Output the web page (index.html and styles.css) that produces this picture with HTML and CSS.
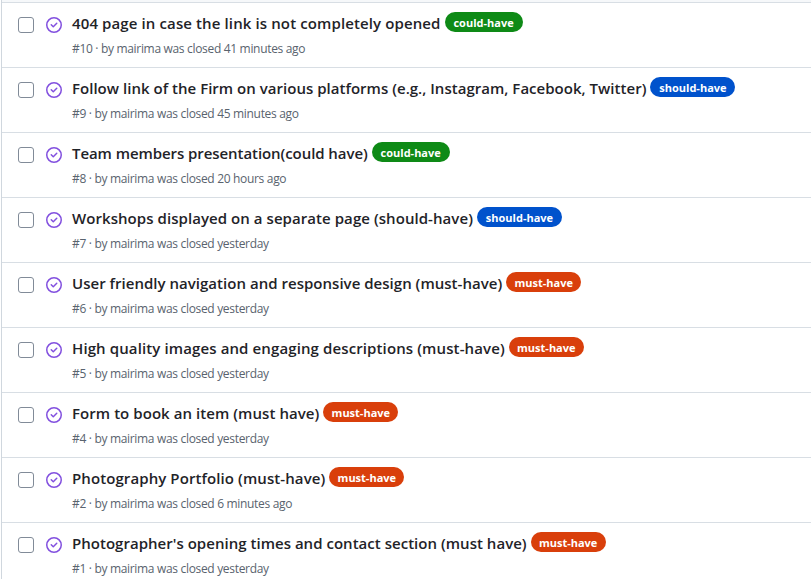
FILE: index.html
```html
<!DOCTYPE html>
<html lang="en">
<head>
<meta charset="utf-8">
<title>Issues</title>
<link rel="stylesheet" href="styles.css">
</head>
<body>
<svg class="defs" aria-hidden="true"><symbol id="closed" viewBox="0 0 16 16"><path d="M11.28 6.78a.75.75 0 0 0-1.06-1.06L7.25 8.69 5.78 7.22a.75.75 0 0 0-1.06 1.06l2 2a.75.75 0 0 0 1.06 0l3.5-3.5Z"/><path d="M16 8A8 8 0 1 1 0 8a8 8 0 0 1 16 0Zm-1.5 0a6.5 6.5 0 1 0-13 0 6.5 6.5 0 0 0 13 0Z"/></symbol></svg>
<main class="issues">
<div class="issues-header"></div>
<div class="issue"><span class="check"></span><svg class="icon"><use href="#closed"/></svg><div class="body"><div class="line"><a class="title wider">404 page in case the link is not completely opened</a><span class="label could">could-have</span></div><div class="meta">#10 · by mairima was closed 41 minutes ago</div></div></div>
<div class="issue"><span class="check"></span><svg class="icon"><use href="#closed"/></svg><div class="body"><div class="line"><a class="title">Follow link of the Firm on various platforms (e.g., Instagram, Facebook, Twitter)</a><span class="label should">should-have</span></div><div class="meta">#9 · by mairima was closed 45 minutes ago</div></div></div>
<div class="issue"><span class="check"></span><svg class="icon"><use href="#closed"/></svg><div class="body"><div class="line"><a class="title tight">Team members presentation(could have)</a><span class="label could">could-have</span></div><div class="meta">#8 · by mairima was closed 20 hours ago</div></div></div>
<div class="issue"><span class="check"></span><svg class="icon"><use href="#closed"/></svg><div class="body"><div class="line"><a class="title relaxed">Workshops displayed on a separate page (should-have)</a><span class="label should">should-have</span></div><div class="meta">#7 · by mairima was closed yesterday</div></div></div>
<div class="issue"><span class="check"></span><svg class="icon"><use href="#closed"/></svg><div class="body"><div class="line"><a class="title">User friendly navigation and responsive design (must-have)</a><span class="label must">must-have</span></div><div class="meta">#6 · by mairima was closed yesterday</div></div></div>
<div class="issue"><span class="check"></span><svg class="icon"><use href="#closed"/></svg><div class="body"><div class="line"><a class="title wider">High quality images and engaging descriptions (must-have)</a><span class="label must">must-have</span></div><div class="meta">#5 · by mairima was closed yesterday</div></div></div>
<div class="issue"><span class="check"></span><svg class="icon"><use href="#closed"/></svg><div class="body"><div class="line"><a class="title relaxed">Form to book an item (must have)</a><span class="label must">must-have</span></div><div class="meta">#4 · by mairima was closed yesterday</div></div></div>
<div class="issue"><span class="check"></span><svg class="icon"><use href="#closed"/></svg><div class="body"><div class="line"><a class="title wide">Photography Portfolio (must-have)</a><span class="label must">must-have</span></div><div class="meta">#2 · by mairima was closed 6 minutes ago</div></div></div>
<div class="issue"><span class="check"></span><svg class="icon"><use href="#closed"/></svg><div class="body"><div class="line"><a class="title">Photographer's opening times and contact section (must have)</a><span class="label must">must-have</span></div><div class="meta">#1 · by mairima was closed yesterday</div></div></div>
</main>
</body>
</html>
```
FILE: styles.css
```css
* { box-sizing: border-box; }
body { margin: 0; height: 579px; overflow: hidden; background: #fff; color: #1f2328; font-family: "Open Sans", "Noto Sans", sans-serif; }
.defs { display: none; }
.issues { margin-left: 1px; border-left: 1px solid #d0d7de; }
.issues-header { height: 2px; background: #f6f8fa; }
.issue { display: flex; height: 65px; padding-left: 16px; border-top: 1px solid #d8dee4; }
.check { flex: none; width: 16px; height: 16px; margin-top: 14px; border: 1px solid #818b98; border-radius: 3px; }
.icon { flex: none; width: 16px; height: 16px; margin: 14px 10px 0 12px; fill: #8250df; }
.body { padding-top: 9px; }
.line { display: flex; height: 24px; white-space: nowrap; }
.title { font-size: 15px; font-weight: 600; line-height: 22px; letter-spacing: 0.025px; }
.tight { letter-spacing: -0.07px; }
.relaxed { letter-spacing: 0.06px; }
.wide { letter-spacing: 0.09px; }
.wider { letter-spacing: 0.115px; }
.label { height: 20px; margin-left: 4px; border-radius: 10px; color: #fff; font-size: 11px; font-weight: 700; line-height: 22px; text-align: center; }
.could { width: 78px; background: #0e8a16; }
.should { width: 85px; background: #0052cc; }
.must { width: 75px; background: #d93f0b; }
.meta { margin-top: 4px; color: #59636e; font-size: 12px; line-height: 18px; letter-spacing: -0.32px; white-space: nowrap; }
```
